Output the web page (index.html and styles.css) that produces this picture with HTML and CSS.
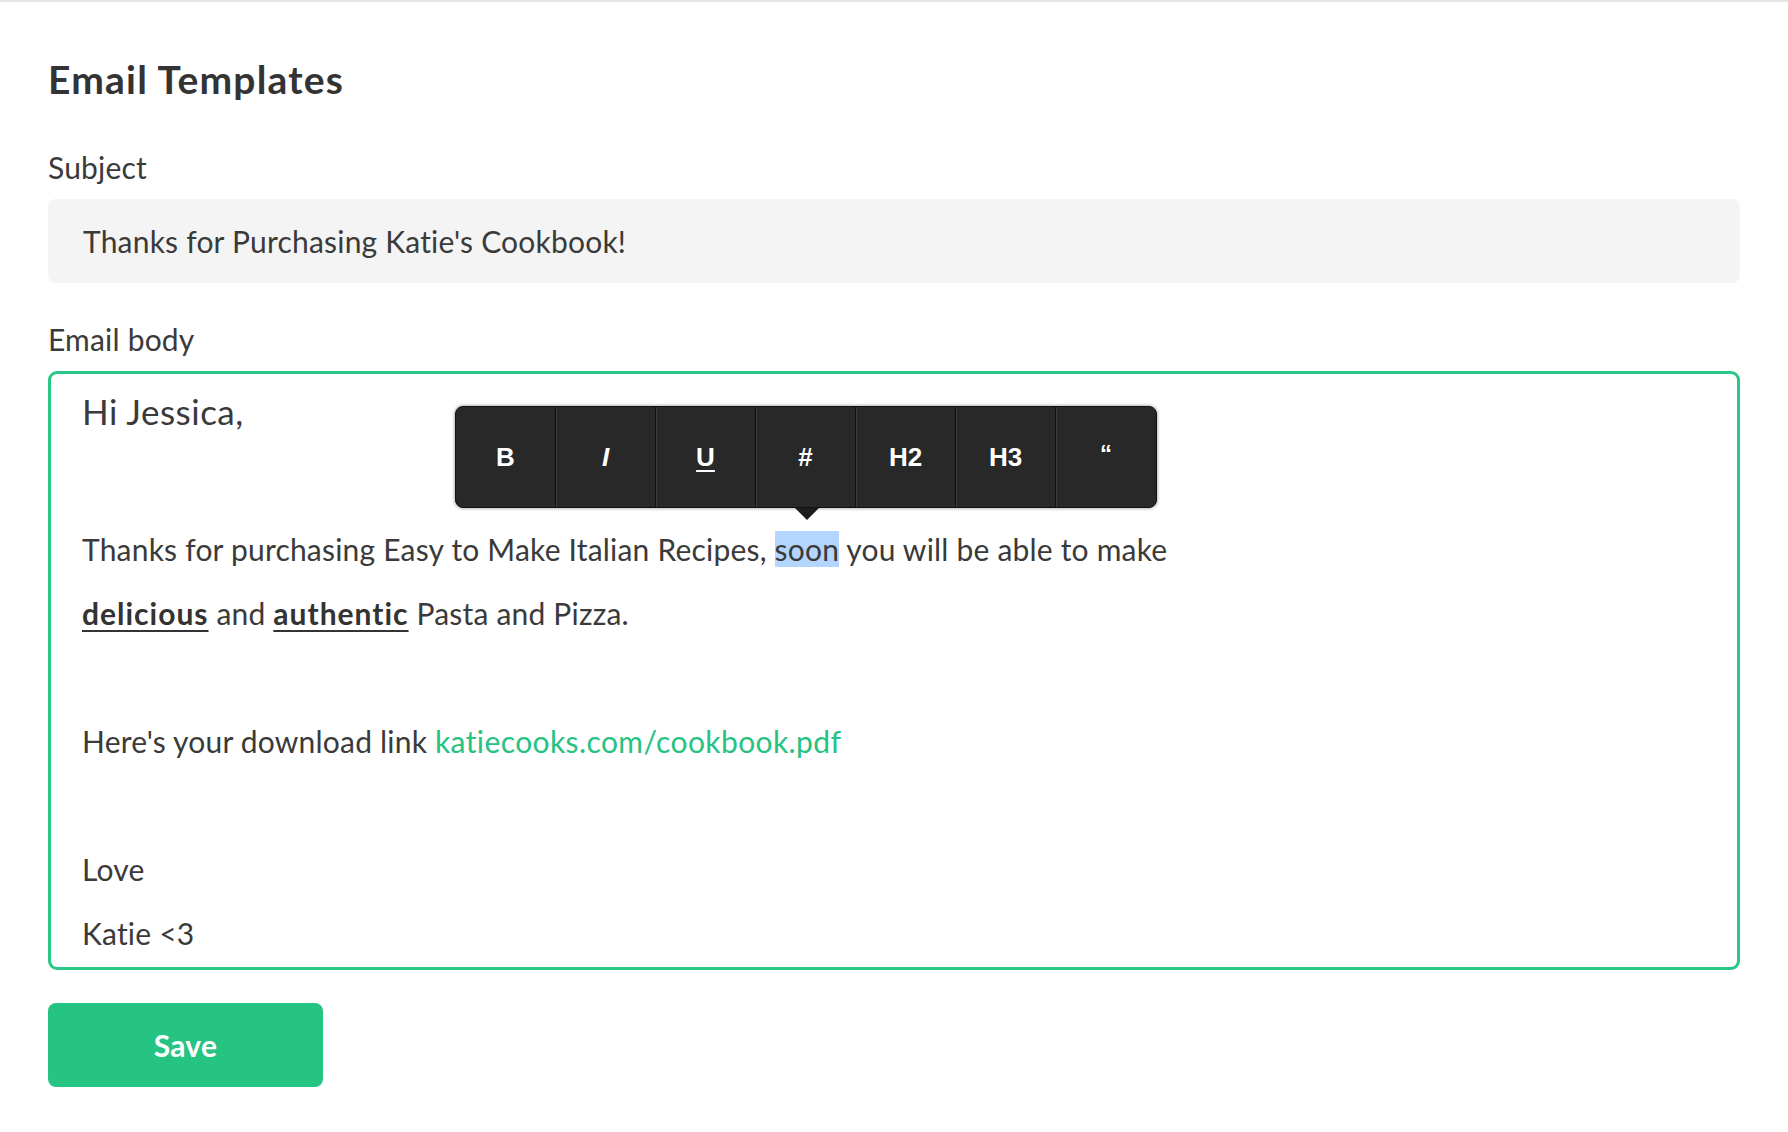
FILE: index.html
```html
<!DOCTYPE html>
<html lang="en">
<head>
<meta charset="utf-8">
<title>Email Templates</title>
<link rel="stylesheet" href="styles.css">
</head>
<body>
<div class="topline"></div>
<main class="page">
  <h1 class="title">Email Templates</h1>

  <label class="field-label">Subject</label>
  <div class="input">Thanks for Purchasing Katie's Cookbook!</div>

  <label class="field-label field-label--spaced">Email body</label>
  <div class="editor">
    <p class="greeting">Hi Jessica,</p>
    <p class="line">Thanks for purchasing Easy to Make Italian Recipes, <span class="selected">soon</span> you will be able to make</p>
    <p class="line"><strong class="em-u">delicious</strong> and <strong class="em-u">authentic</strong> Pasta and Pizza.</p>
    <p class="line">&nbsp;</p>
    <p class="line">Here's your download link <a class="link" href="#">katiecooks.com/cookbook.pdf</a></p>
    <p class="line">&nbsp;</p>
    <p class="line">Love</p>
    <p class="line">Katie &lt;3</p>

    <div class="toolbar">
      <span class="tb-btn">B</span>
      <span class="tb-btn tb-italic">I</span>
      <span class="tb-btn tb-underline">U</span>
      <span class="tb-btn">#</span>
      <span class="tb-btn">H2</span>
      <span class="tb-btn">H3</span>
      <span class="tb-btn tb-quote">&ldquo;</span>
    </div>
  </div>

  <button class="save" type="button">Save</button>
</main>
</body>
</html>
```

FILE: styles.css
```css
* { box-sizing: border-box; }

html, body {
  margin: 0;
  padding: 0;
  background: #ffffff;
}

body {
  font-family: Lato, "Open Sans", "Liberation Sans", sans-serif;
  color: #3a3a3a;
  letter-spacing: 0.2px;
}

.topline {
  height: 2px;
  background: #e7e7e7;
}

.page {
  padding: 0 48px;
  display: flex;
  flex-direction: column;
  align-items: stretch;
}

.title {
  margin: 53px 0 44px;
  font-size: 39px;
  line-height: 48px;
  font-weight: 700;
  letter-spacing: 1.2px;
  color: #333333;
}

.field-label {
  display: block;
  font-size: 30px;
  line-height: 40px;
  margin: 0 0 12px;
  color: #3a3a3a;
}

.field-label--spaced {
  margin-top: 36px;
}

.input {
  height: 84px;
  line-height: 84px;
  padding: 0 35px;
  background: #f4f4f4;
  border-radius: 8px;
  font-size: 30px;
  color: #3a3a3a;
}

.editor {
  position: relative;
  border: 3px solid #2ac786;
  border-radius: 9px;
  padding: 5px 31px 1px;
  height: 599px;
}

.editor p {
  margin: 0;
}

.greeting {
  font-size: 35px;
  line-height: 64px;
  letter-spacing: 0.5px;
  margin-bottom: 74px !important;
}

.line {
  font-size: 30px;
  line-height: 64px;
}

.selected {
  background: #b4d5fd;
}

.em-u {
  font-weight: 700;
  color: #333333;
  letter-spacing: 1px;
  text-decoration: underline;
  text-decoration-thickness: 2px;
  text-underline-offset: 5px;
}

.link {
  color: #26c281;
  text-decoration: none;
  letter-spacing: 0.4px;
}

.toolbar {
  position: absolute;
  left: 404px;
  top: 32px;
  display: flex;
  height: 102px;
  background: #282828;
  border: 1px solid #111111;
  border-radius: 8px;
  box-shadow: 0 0 3px 1px rgba(0, 0, 0, 0.28);
  letter-spacing: 0;
}

.toolbar::after {
  content: "";
  position: absolute;
  left: 339px;
  bottom: -13px;
  border-left: 12px solid transparent;
  border-right: 12px solid transparent;
  border-top: 12px solid #1c1c1c;
}

.tb-btn {
  width: 100px;
  display: flex;
  align-items: center;
  justify-content: center;
  font-family: "Liberation Sans", Arial, sans-serif;
  font-weight: 700;
  font-size: 26px;
  color: #ffffff;
  border-right: 1px solid #0f0f0f;
  box-shadow: inset 1px 0 0 #3c3c3c;
}

.tb-btn:first-child {
  box-shadow: none;
}

.tb-btn:last-child {
  border-right: 0;
}

.tb-italic {
  font-style: italic;
}

.tb-underline {
  text-decoration: underline;
  text-decoration-thickness: 2px;
  text-underline-offset: 4px;
}

.tb-quote {
  font-size: 24px;
  padding-bottom: 6px;
}

.save {
  margin-top: 33px;
  align-self: flex-start;
  width: 275px;
  height: 84px;
  border: 0;
  border-radius: 8px;
  background: #26c482;
  color: #ffffff;
  font-family: Lato, "Open Sans", sans-serif;
  font-weight: 700;
  font-size: 30px;
  letter-spacing: 0.3px;
  cursor: pointer;
}
```
